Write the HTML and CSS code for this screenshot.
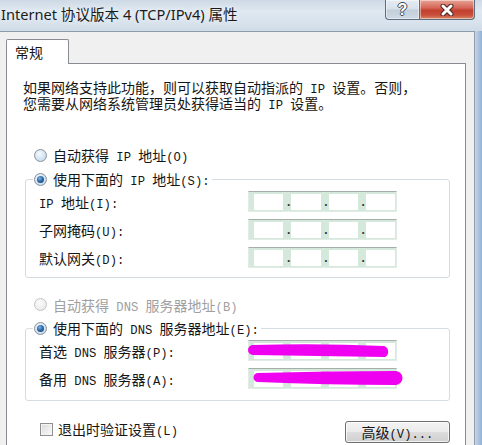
FILE: index.html
```html
<!DOCTYPE html>
<html lang="zh-CN">
<head>
<meta charset="utf-8">
<title>Internet 协议版本 4 (TCP/IPv4) 属性</title>
<link rel="stylesheet" href="styles.css">
</head>
<body>
<div class="window">
  <div class="titlebar">
    <div class="title">Internet 协议版本 4 (TCP/IPv4) 属性</div>
    <div class="caption">
      <div class="cap help"><span class="q">?</span></div>
      <div class="cap close">
        <svg width="16" height="12" viewBox="0 0 16 12">
          <path d="M4 2 L12 10 M12 2 L4 10" stroke="#4a2620" stroke-width="5" stroke-linecap="round" fill="none"/>
          <path d="M4 2 L12 10 M12 2 L4 10" stroke="#ffffff" stroke-width="3" stroke-linecap="round" fill="none"/>
        </svg>
      </div>
    </div>
  </div>
  <div class="main">
    <div class="client">
      <div class="tabs"><div class="tab">常规</div></div>
      <div class="page">
        <p class="intro">如果网络支持此功能，则可以获取自动指派的<span class="en"> IP </span>设置。否则，<br>您需要从网络系统管理员处获得适当的<span class="en"> IP </span>设置。</p>

        <div class="radio-row r1"><span class="radio"></span><span class="txt">自动获得<span class="en"> IP </span>地址<span class="en">(O)</span></span></div>
        <fieldset class="group g1">
          <legend class="legend"><span class="radio checked"></span><span class="txt">使用下面的<span class="en"> IP </span>地址<span class="en">(S):</span></span></legend>
          <div class="rows">
            <div class="row"><span class="lbl"><span class="en">IP </span>地址<span class="en">(I):</span></span>
              <div class="ip"><span class="cell"></span><span class="sep">.</span><span class="cell"></span><span class="sep">.</span><span class="cell"></span><span class="sep">.</span><span class="cell"></span></div>
            </div>
            <div class="row"><span class="lbl">子网掩码<span class="en">(U):</span></span>
              <div class="ip"><span class="cell"></span><span class="sep">.</span><span class="cell"></span><span class="sep">.</span><span class="cell"></span><span class="sep">.</span><span class="cell"></span></div>
            </div>
            <div class="row"><span class="lbl">默认网关<span class="en">(D):</span></span>
              <div class="ip"><span class="cell"></span><span class="sep">.</span><span class="cell"></span><span class="sep">.</span><span class="cell"></span><span class="sep">.</span><span class="cell"></span></div>
            </div>
          </div>
        </fieldset>

        <div class="radio-row r3 disabled"><span class="radio"></span><span class="txt">自动获得<span class="en"> DNS </span>服务器地址<span class="en">(B)</span></span></div>
        <fieldset class="group g2">
          <legend class="legend"><span class="radio checked"></span><span class="txt">使用下面的<span class="en"> DNS </span>服务器地址<span class="en">(E):</span></span></legend>
          <div class="rows">
            <div class="row"><span class="lbl">首选<span class="en"> DNS </span>服务器<span class="en">(P):</span></span>
              <div class="ip"><span class="cell"></span><span class="sep">.</span><span class="cell"></span><span class="sep">.</span><span class="cell"></span><span class="sep">.</span><span class="cell"></span>
                <svg class="scribble" viewBox="0 0 149 21" width="149" height="21">
                  <path d="M5 5 Q 70 3 136 6 A 6 6 0 0 1 137 17 Q 70 16 5 15 A 5 5 0 0 1 5 5 Z" fill="#f000f0"/>
                </svg>
              </div>
            </div>
            <div class="row"><span class="lbl">备用<span class="en"> DNS </span>服务器<span class="en">(A):</span></span>
              <div class="ip"><span class="cell"></span><span class="sep">.</span><span class="cell"></span><span class="sep">.</span><span class="cell"></span><span class="sep">.</span><span class="cell"></span>
                <svg class="scribble" viewBox="0 0 149 21" width="149" height="21">
                  <path d="M10 5 Q 80 3 147 3 A 7 7 0 0 1 148 17 Q 80 17 10 14 A 4.5 4.5 0 0 1 10 5 Z" fill="#f000f0"/>
                </svg>
              </div>
            </div>
          </div>
        </fieldset>

        <div class="bottom-row">
          <label class="check-row"><span class="checkbox"></span><span class="txt">退出时验证设置<span class="en">(L)</span></span></label>
          <button class="btn" type="button">高级<span class="en">(V)...</span></button>
        </div>
      </div>
    </div>
    <div class="frame-right"></div>
  </div>
</div>
</body>
</html>
```

FILE: styles.css
```css
html, body {
  margin: 0;
  padding: 0;
}

body {
  width: 482px;
  height: 445px;
  overflow: hidden;
  background: #d8e2ec;
  font-family: "Noto Sans CJK SC", sans-serif;
  font-size: 14px;
  line-height: 16px;
  color: #151515;
}

.en {
  font-family: "Liberation Mono", monospace;
  font-size: 12.2px;
  line-height: 0;
}

.txt {
  line-height: 16px;
  white-space: nowrap;
}

.window {
  display: flex;
  flex-direction: column;
  height: 445px;
}

/* ---------- title bar ---------- */
.titlebar {
  height: 31px;
  flex: none;
  display: flex;
  justify-content: space-between;
  align-items: flex-start;
  background: linear-gradient(180deg, #cdd9e5 0%, #dfe8f1 35%, #d9e3ed 70%, #cfdbe7 100%);
}

.title {
  font-family: "Noto Sans", "Noto Sans CJK SC", sans-serif;
  font-size: 14.6px;
  line-height: 20px;
  padding: 4px 0 0 1px;
  color: #1b1b1b;
  white-space: nowrap;
  text-shadow: 0 0 6px rgba(255, 255, 255, 0.9);
}

.caption {
  display: flex;
  margin-right: 7px;
}

.cap {
  height: 19px;
  display: flex;
  align-items: center;
  justify-content: center;
  border: 1px solid #5f6e7e;
  border-top: none;
  box-shadow: inset 0 0 0 1px rgba(255, 255, 255, 0.45);
}

.help {
  width: 33px;
  border-right: none;
  border-radius: 0 0 0 4px;
  background: linear-gradient(180deg, #e6ecf2 0%, #d8e1ea 45%, #c3cfdb 55%, #cfd9e4 100%);
}

.q {
  font-family: "Liberation Sans", sans-serif;
  font-weight: bold;
  font-size: 16px;
  line-height: 16px;
  color: #ffffff;
  text-shadow: -1px 0 #3d4a58, 1px 0 #3d4a58, 0 -1px #3d4a58, 0 1px #3d4a58;
}

.close {
  width: 54px;
  border-radius: 0 0 4px 0;
  background: linear-gradient(180deg, #e7a496 0%, #d6685a 40%, #c2402f 55%, #c9503a 80%, #d98a6c 100%);
}

/* ---------- main area ---------- */
.main {
  display: flex;
  flex: 1;
  min-height: 0;
}

.client {
  width: 475px;
  flex: none;
  background: #f0f0f0;
  border-top: 1px solid #8e9ba8;
  border-right: 1px solid #8e9ba8;
  padding: 7px 0 0 6px;
  box-sizing: border-box;
  display: flex;
  flex-direction: column;
}

.frame-right {
  flex: 1;
  background: linear-gradient(90deg, #c9d6e3 0%, #b3c8df 35%, #93b2d8 100%);
}

.tabs {
  display: flex;
  position: relative;
  z-index: 1;
  margin-bottom: -1px;
}

.tab {
  width: 53px;
  height: 24px;
  line-height: 24px;
  padding-left: 8px;
  background: #ffffff;
  border: 1px solid #898c95;
  border-bottom: none;
  border-radius: 2px 2px 0 0;
}

.page {
  width: 460px;
  box-sizing: border-box;
  flex: 1;
  background: #ffffff;
  border: 1px solid #898c95;
  border-bottom: none;
}

.intro {
  margin: 15px 0 0 16px;
  line-height: 16px;
  white-space: nowrap;
}

/* ---------- radios ---------- */
.radio-row {
  display: flex;
  align-items: center;
  gap: 6px;
  height: 24px;
  margin-left: 27px;
}

.r1 {
  margin-top: 32px;
}

.r3 {
  height: 23px;
  margin-top: 15px;
}

.disabled {
  color: #a0a0a0;
}

.radio {
  width: 13px;
  height: 13px;
  box-sizing: border-box;
  flex: none;
  border-radius: 50%;
  border: 1px solid #8a9199;
  background: radial-gradient(circle at 40% 35%, #f6fafd 0%, #d6e6f4 50%, #b8d2ea 100%);
  display: flex;
  align-items: center;
  justify-content: center;
}

.radio.checked::after {
  content: "";
  width: 7px;
  height: 7px;
  border-radius: 50%;
  background: radial-gradient(circle at 40% 35%, #7fb6e6 0%, #2f6aa6 45%, #163e6a 100%);
}

.disabled .radio {
  border-color: #c2c5c8;
  background: radial-gradient(circle at 40% 35%, #fbfbfb 0%, #eeeeee 60%, #e2e2e2 100%);
}

/* ---------- group boxes ---------- */
.group {
  margin: 0 15px 0 18px;
  padding: 0 0 9px 7px;
  border: 1px solid #d5dde3;
  border-radius: 3px;
  min-width: 0;
}

.g2 {
  padding-bottom: 11px;
}

.legend {
  display: flex;
  align-items: center;
  gap: 6px;
  height: 24px;
  padding: 0 2px 0 1px;
}

.rows {
  display: flex;
  flex-direction: column;
  gap: 7px;
}

.row {
  display: flex;
  align-items: center;
  height: 21px;
}

.lbl {
  width: 209px;
  margin-left: 6px;
  flex: none;
  white-space: nowrap;
  line-height: 16px;
}

/* ---------- IP address control ---------- */
.ip {
  position: relative;
  width: 149px;
  height: 21px;
  box-sizing: border-box;
  display: flex;
  padding: 2px 1px 1px 5px;
  background: #d4e8dc;
  border: 1px solid #e2ebe6;
  border-top-color: #a6aeaa;
}

.cell {
  flex: 1;
  background: #ffffff;
}

.sep {
  width: 8px;
  flex: none;
  text-align: right;
  padding-right: 1px;
  box-sizing: border-box;
  font-family: "Liberation Sans", sans-serif;
  font-size: 12px;
  line-height: 17px;
  color: #333333;
  font-weight: bold;
}

.scribble {
  position: absolute;
  left: -1px;
  top: -1px;
  overflow: visible;
}

/* ---------- bottom row ---------- */
.bottom-row {
  display: flex;
  justify-content: space-between;
  align-items: flex-start;
  margin: 20px 15px 0 33px;
}

.check-row {
  display: flex;
  align-items: center;
  gap: 5px;
  height: 16px;
}

.checkbox {
  width: 13px;
  height: 13px;
  box-sizing: border-box;
  flex: none;
  border: 1px solid #8f8f8f;
  background: linear-gradient(135deg, #d8d8d8 0%, #eeeeee 60%, #fafafa 100%);
  box-shadow: inset 0 0 0 1px #f4f4f4;
}

.btn {
  width: 105px;
  height: 22px;
  padding: 0;
  border: 1px solid #707070;
  border-radius: 3px;
  background: linear-gradient(180deg, #f4f4f4 0%, #ebebeb 48%, #dddddd 52%, #cfcfcf 100%);
  box-shadow: inset 0 0 0 1px rgba(255, 255, 255, 0.7);
  font-family: "Noto Sans CJK SC", sans-serif;
  font-size: 14px;
  color: #151515;
  line-height: 18px;
}
```
